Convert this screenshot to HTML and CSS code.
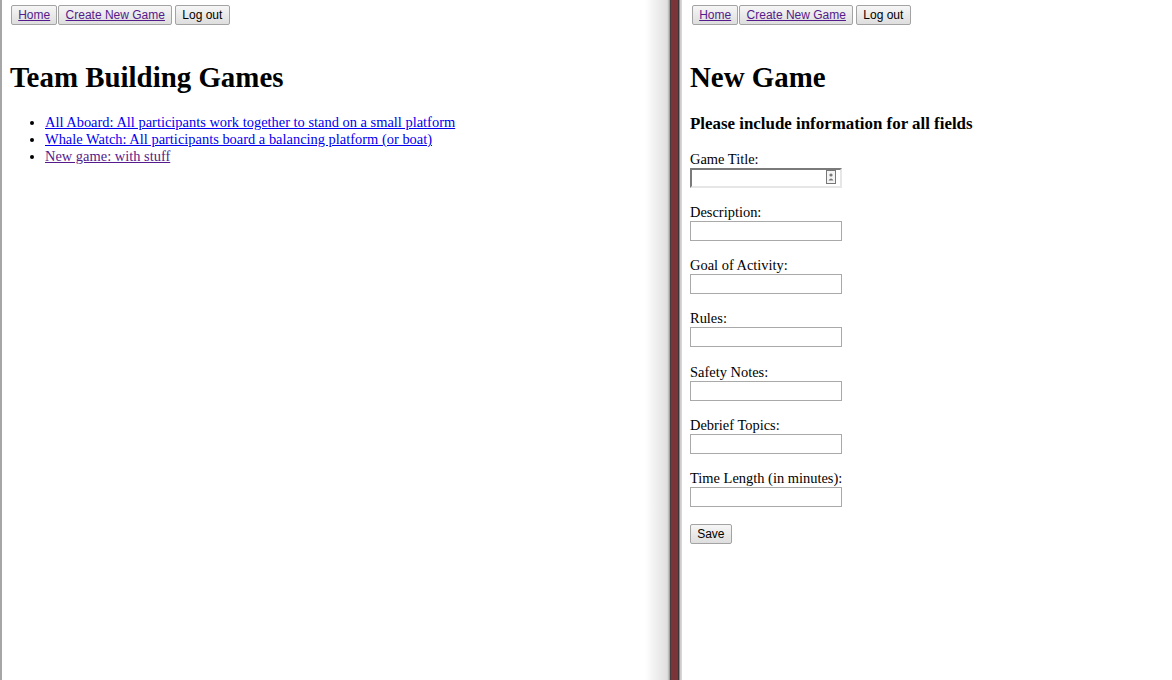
FILE: index.html
```
<!DOCTYPE html>
<html>
<head>
<meta charset="utf-8">
<title>Team Building Games</title>
<link rel="stylesheet" href="styles.css">
</head>
<body>
<div class="split">
  <section class="pane pane-left">
    <nav class="nav">
      <button class="btn btn-tight"><a href="#">Home</a></button><button class="btn btn-gap"><a href="#">Create New Game</a></button><button class="btn">Log out</button>
    </nav>
    <h1 class="title">Team Building Games</h1>
    <ul class="games">
      <li><a class="link-new" href="#">All Aboard: All participants work together to stand on a small platform</a></li>
      <li><a class="link-new" href="#">Whale Watch: All participants board a balancing platform (or boat)</a></li>
      <li><a href="#">New game: with stuff</a></li>
    </ul>
  </section>
  <div class="divider"></div>
  <section class="pane pane-right">
    <nav class="nav nav-right">
      <button class="btn btn-tight"><a href="#">Home</a></button><button class="btn btn-gap"><a href="#">Create New Game</a></button><button class="btn">Log out</button>
    </nav>
    <h1 class="title">New Game</h1>
    <h3 class="subtitle">Please include information for all fields</h3>
    <form class="form">
      <div class="field">
        <label>Game Title:</label>
        <div class="input input-focus">
          <svg class="autofill" width="10" height="14" viewBox="0 0 10 14"><rect x="0.5" y="0.5" width="9" height="13" fill="#f4f4f4" stroke="#777"/><circle cx="5" cy="5" r="1.6" fill="#777"/><path d="M2.5 10.5 Q5 6.5 7.5 10.5 Z" fill="#777"/></svg>
        </div>
      </div>
      <div class="field"><label>Description:</label><div class="input"></div></div>
      <div class="field"><label>Goal of Activity:</label><div class="input"></div></div>
      <div class="field"><label>Rules:</label><div class="input"></div></div>
      <div class="field"><label>Safety Notes:</label><div class="input"></div></div>
      <div class="field"><label>Debrief Topics:</label><div class="input"></div></div>
      <div class="field"><label>Time Length (in minutes):</label><div class="input"></div></div>
      <button class="btn btn-save" type="button">Save</button>
    </form>
  </section>
</div>
</body>
</html>
```

FILE: styles.css
```
html, body {
  margin: 0;
  padding: 0;
  background: #fff;
}
body {
  font-family: "Liberation Serif", "Times New Roman", serif;
  font-size: 14.45px;
  line-height: 17px;
  color: #000;
}
.split {
  display: flex;
  height: 680px;
  overflow: hidden;
}
.pane {
  box-sizing: border-box;
}
.pane-left {
  flex: 0 0 645px;
  border-left: 2px solid #a6a6a6;
  padding-left: 8px;
}
.pane-right {
  flex: 1 1 auto;
  padding-left: 8px;
}
.divider {
  flex: 0 0 37px;
  background: linear-gradient(to right,
    #ffffff 0px, #f6f6f6 6px, #ebebeb 14px, #e0e0e0 22px,
    #cfcfcf 23px, #b4b4b4 24px, #8a8a8a 25px,
    #4a3a3c 25px, #4a3a3c 26px,
    #7b3539 26px, #7b3539 33px,
    #3c3436 33px, #3c3436 34px,
    #8c8c8c 34px, #8c8c8c 35px,
    #c8c8c8 35px, #dcdcdc 37px);
}
.nav {
  display: flex;
  align-items: flex-start;
  height: 37px;
  padding-top: 5px;
  padding-left: 1px;
  box-sizing: border-box;
}
.nav-right {
  padding-left: 2px;
}
.btn {
  font-family: "Liberation Sans", Arial, sans-serif;
  font-size: 12px;
  line-height: 14px;
  height: 20px;
  padding: 2px 6.2px;
  margin: 0;
  border: 1px solid #a3a3a3;
  border-radius: 2px;
  background: linear-gradient(#f6f6f6, #dedede);
  color: #000;
  box-sizing: border-box;
}
.btn a {
  color: #551a8b;
  text-decoration: underline;
}
.btn-tight {
  margin-right: 1px;
}
.btn-gap {
  margin-right: 3px;
}
.title {
  font-size: 28.9px;
  line-height: 37px;
  font-weight: bold;
  margin: 22px 0 18px;
}
.games {
  margin: 0;
  padding-left: 35px;
}
.games li {
  line-height: 17px;
}
.games a {
  color: #551a8b;
}
.games a.link-new {
  color: #0000ee;
}
.subtitle {
  font-size: 16.9px;
  line-height: 22px;
  font-weight: bold;
  margin: -1.5px 0 16px;
}
.form {
  margin: 0;
}
.field {
  margin-bottom: 16.33px;
}
.field label {
  display: block;
  line-height: 17px;
}
.input {
  width: 152px;
  height: 20px;
  box-sizing: border-box;
  border: 1px solid #a9a9a9;
  background: #fff;
  position: relative;
}
.input-focus {
  border-width: 2px;
  border-style: solid;
  border-color: #7a7a7a #e6e6e6 #e6e6e6 #7a7a7a;
}
.autofill {
  position: absolute;
  right: 4px;
  top: 0px;
}
.btn-save {
  display: block;
  margin-top: 0;
}
```
